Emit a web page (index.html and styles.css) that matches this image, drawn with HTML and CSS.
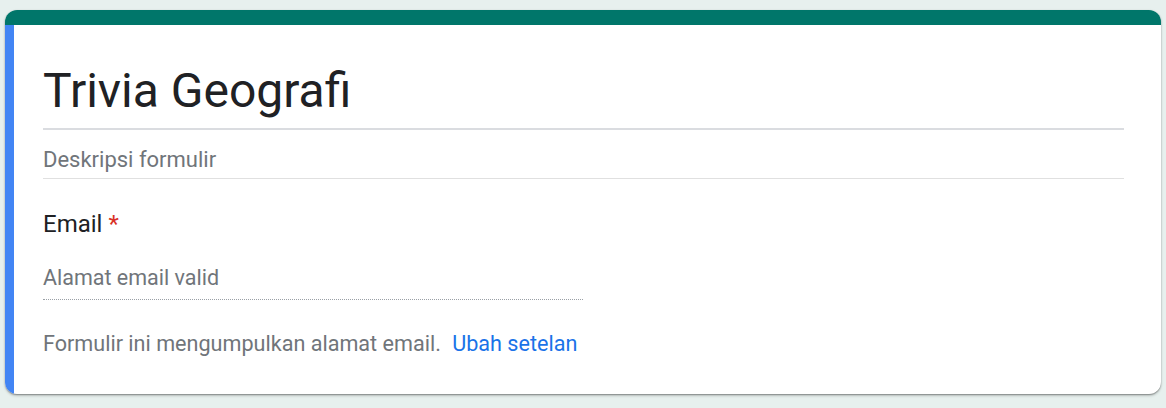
FILE: index.html
```html
<!DOCTYPE html>
<html lang="id">
<head>
<meta charset="utf-8">
<title>Trivia Geografi</title>
<link rel="stylesheet" href="styles.css">
</head>
<body>
<div class="card">
  <div class="band"></div>
  <div class="content">
    <div class="title">Trivia Geografi</div>
    <div class="desc">Deskripsi formulir</div>
    <div class="question">
      <div class="label">Email <span class="req">*</span></div>
      <div class="input">Alamat email valid</div>
    </div>
    <div class="note">Formulir ini mengumpulkan alamat email. <a class="link" href="#">Ubah setelan</a></div>
  </div>
</div>
</body>
</html>
```
FILE: styles.css
```css
html, body {
  margin: 0;
  padding: 0;
}
body {
  background: #e7f0ee;
  font-family: Roboto, "Liberation Sans", Arial, sans-serif;
  width: 1166px;
  height: 408px;
  overflow: hidden;
}
.card {
  margin: 10px 0 0 5px;
  width: 1156px;
  background: #ffffff;
  border-radius: 12px;
  overflow: hidden;
  box-shadow: 0 1px 1.5px rgba(0,0,0,0.35), 0 1.5px 3px rgba(0,0,0,0.15);
}
.band {
  height: 15px;
  background: #00766a;
}
.content {
  border-left: 9px solid #4285f4;
  padding: 36px 37px 35px 29px;
}
.title {
  font-size: 48px;
  line-height: 60px;
  color: #202124;
  padding-bottom: 7px;
  border-bottom: 2px solid #dadce0;
}
.desc {
  margin-top: 15px;
  font-size: 22px;
  line-height: 30px;
  color: #70757a;
  padding-bottom: 3px;
  border-bottom: 1px solid #e0e0e0;
}
.question {
  margin-top: 27px;
}
.label {
  font-size: 24px;
  line-height: 36px;
  color: #202124;
}
.req {
  color: #d93025;
}
.input {
  margin-top: 21px;
  width: 540px;
  font-size: 21.5px;
  line-height: 30px;
  color: #70757a;
  padding-bottom: 6px;
  border-bottom: 1px dotted #9aa0a6;
}
.note {
  margin-top: 29px;
  font-size: 21.6px;
  line-height: 30px;
  color: #70757a;
}
.link {
  color: #1a73e8;
  text-decoration: none;
  margin-left: 6px;
}
```
